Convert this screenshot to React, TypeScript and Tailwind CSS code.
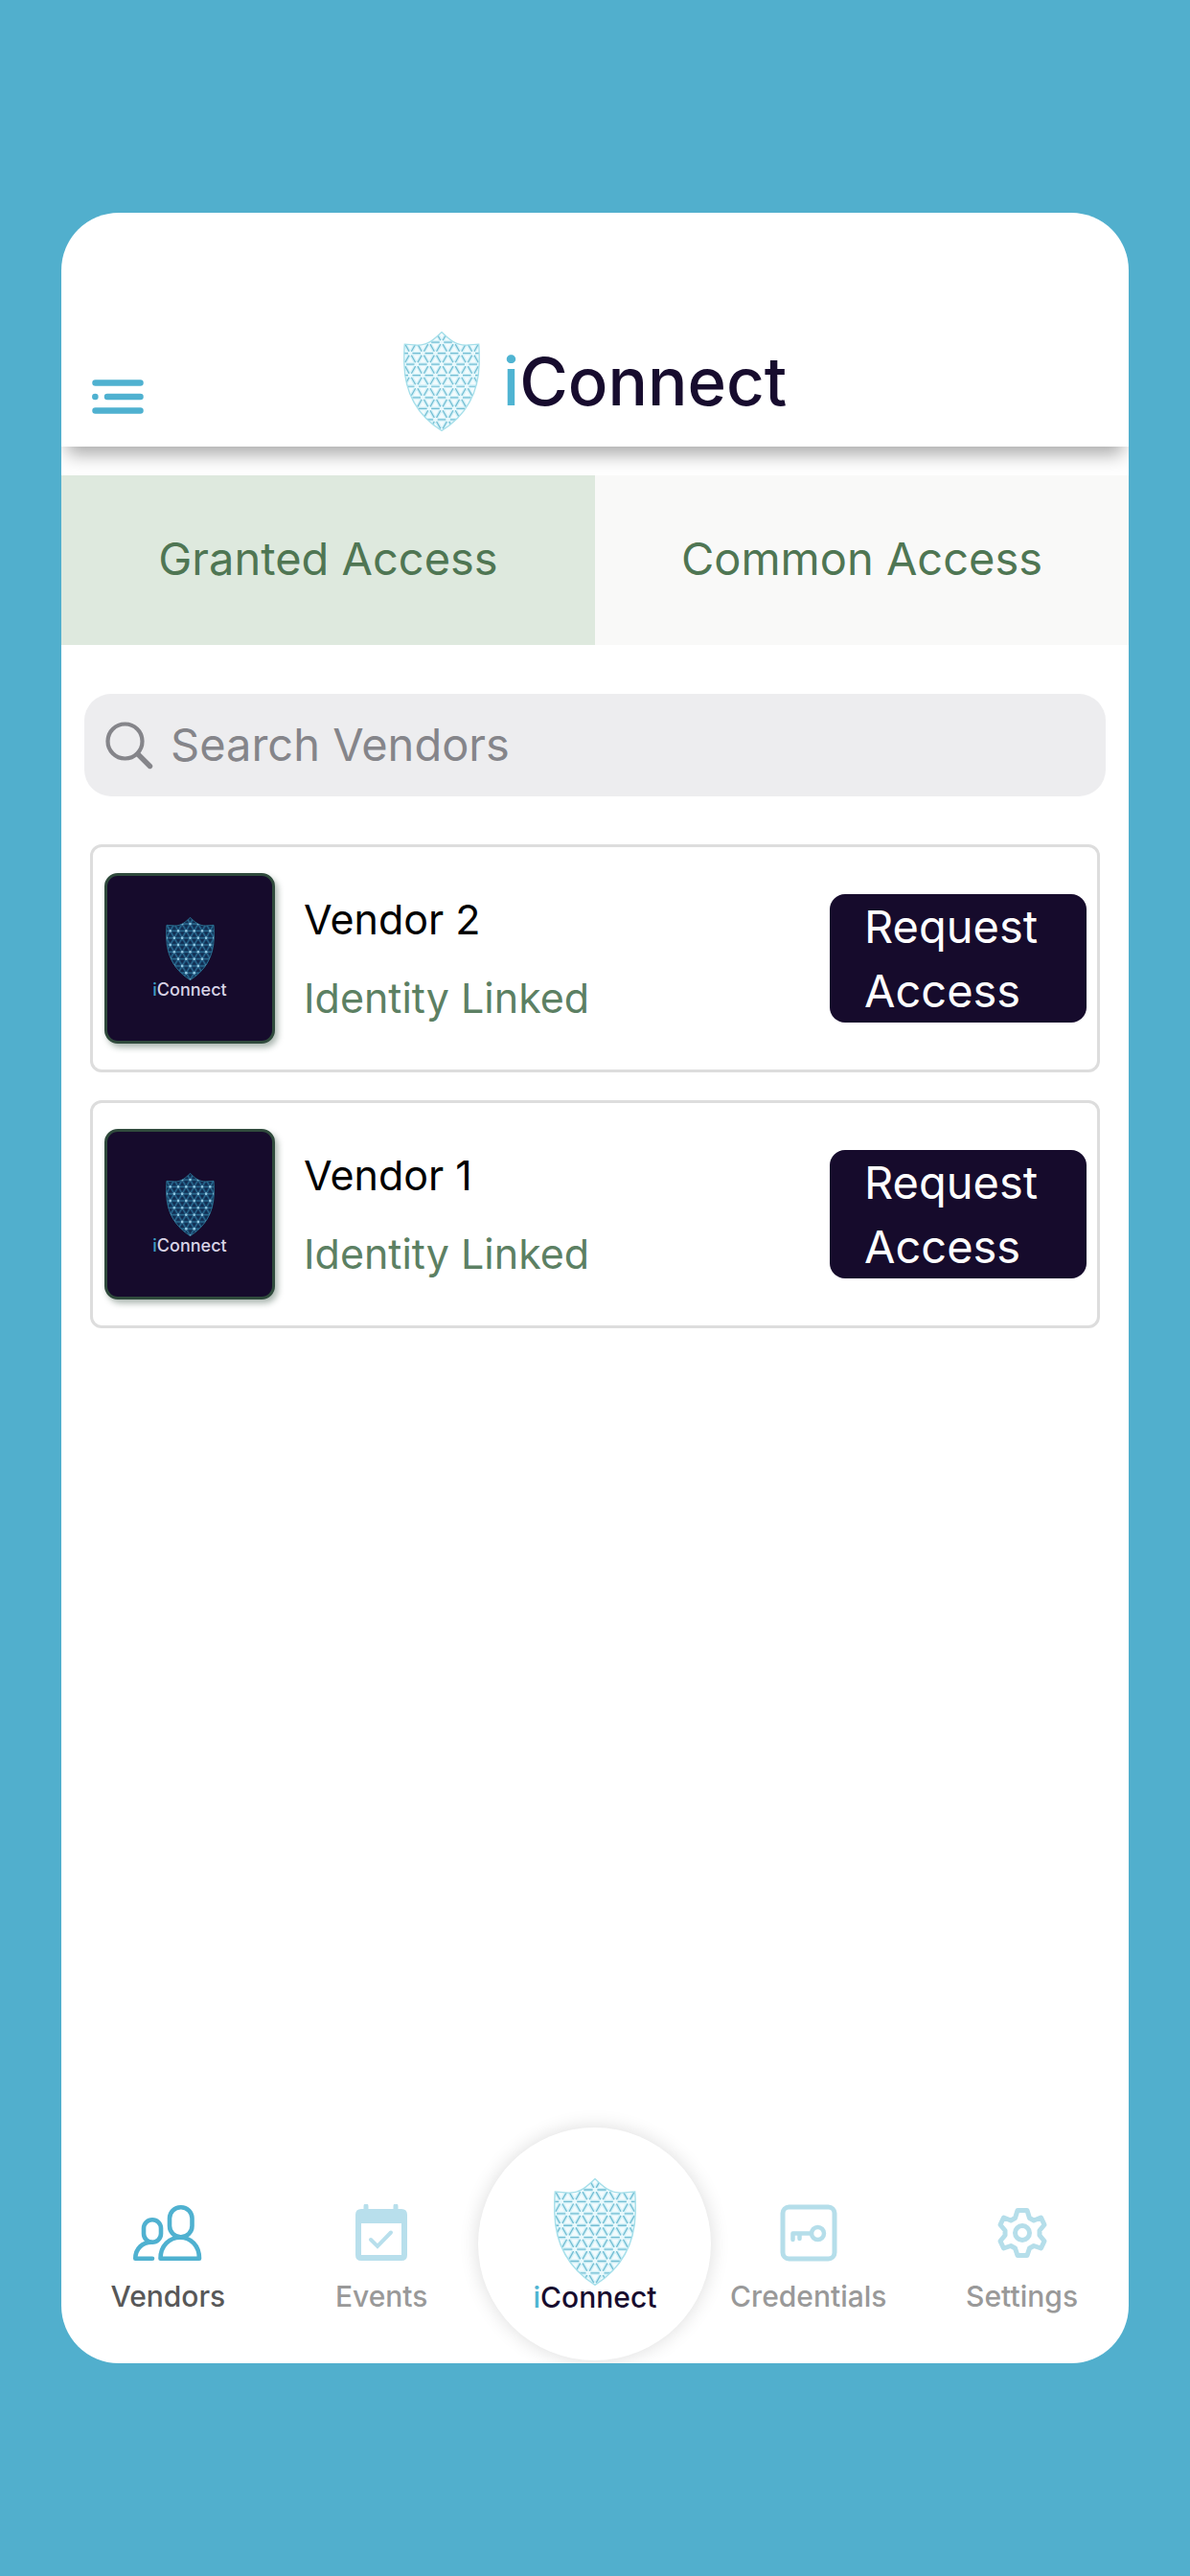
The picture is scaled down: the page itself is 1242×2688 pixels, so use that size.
import React, { useId, useState } from "react";

const SHIELD =
  "M42.5 .6C35 8 27 15.5 15 15L1.2 14C.6 20 .6 28 .7 36C1.5 72 18 95 42.5 110.4C67 95 83.5 72 84.3 36C84.4 28 84.4 20 83.8 14L70 15C58 15.5 50 8 42.5 .6Z";

const STEP_X = 14;
const STEP_Y = 12.3;

// triangular mesh: every edge is cut short so the joints stay open
const buildMesh = () => {
  const nodes: [number, number][] = [];
  let lines = "";

  const edge = (x1: number, y1: number, x2: number, y2: number) => {
    const t = 0.17;
    const dx = (x2 - x1) * t;
    const dy = (y2 - y1) * t;
    lines += `M${(x1 + dx).toFixed(1)} ${(y1 + dy).toFixed(1)}L${(x2 - dx).toFixed(1)} ${(y2 - dy).toFixed(1)}`;
  };

  for (let row = 0; row < 10; row++) {
    const y = row * STEP_Y - 0.4;
    const shift = row % 2 === 1 ? 0 : STEP_X / 2;
    for (let col = -4; col <= 4; col++) {
      const x = 42.5 + col * STEP_X + shift;
      nodes.push([x, y]);
      edge(x, y, x + STEP_X, y);
      edge(x, y, x - STEP_X / 2, y + STEP_Y);
      edge(x, y, x + STEP_X / 2, y + STEP_Y);
    }
  }
  return { nodes, lines };
};

const mesh = buildMesh();

const Shield = ({ className, dark = false }: { className: string; dark?: boolean }) => {
  const id = useId();
  return (
    <svg viewBox="0 0 85 111" className={className} aria-hidden="true">
      <clipPath id={id}>
        <path d={SHIELD} />
      </clipPath>
      <g clipPath={`url(#${id})`}>
        <path d={SHIELD} fill={dark ? "#122c50" : "#f3fbfd"} />
        <path d={mesh.lines} stroke={dark ? "#1d4c74" : "#d3f1f8"} strokeWidth="4" />
        <path d={mesh.lines} stroke={dark ? "#2f7699" : "#74bed3"} strokeWidth="1.3" />
        {mesh.nodes.map(([x, y], i) => (
          <circle key={i} cx={x} cy={y} r={dark ? 2.4 : 1.8} fill={dark ? "#8fc9e4" : "#e6f8fc"} />
        ))}
      </g>
      <path d={SHIELD} fill="none" stroke={dark ? "#2b7696" : "#a5dfea"} strokeWidth="1.4" />
    </svg>
  );
};

const MenuIcon = () => (
  <svg viewBox="0 0 54 36" className="w-[54px] h-9" fill="none" stroke="#4fb1d0" strokeWidth="6.5" strokeLinecap="round">
    <path d="M3.5 3.5H50.5M3.3 18H3.4M16 18H50.5M3.5 32.5H50.5" />
  </svg>
);

const SearchIcon = () => (
  <svg viewBox="0 0 50 50" className="size-[50px] shrink-0" fill="none" stroke="#85858a" strokeLinecap="round">
    <circle cx="20.5" cy="20.5" r="18" strokeWidth="4.2" />
    <path d="M34 34L46.5 46.5" strokeWidth="5.4" />
  </svg>
);

const VendorsIcon = () => (
  <svg viewBox="0 0 72 60" className="w-[72px] h-[60px]" fill="none" stroke="#4fb1d0" strokeWidth="4.6" strokeLinecap="round" strokeLinejoin="round">
    <rect x="38" y="3.2" width="23.5" height="31" rx="11.5" />
    <path d="M28.5 56.8C28.5 43 38 34.8 49 34.8S69 43 69 56.8Z" />
    <rect x="11" y="16.2" width="18" height="23.5" rx="9" />
    <path d="M20 56.8H2.3C2.3 46 10 39.8 19 39.8" />
  </svg>
);

const EventsIcon = () => (
  <svg viewBox="0 0 54 60" className="w-[54px] h-[60px]" fill="none" stroke="#b8dfec" strokeLinecap="round">
    <path d="M11 2V8M42 2V8" strokeWidth="5" />
    <path
      stroke="none"
      fillRule="evenodd"
      fill="#b8dfec"
      d="M6 5H48Q54 5 54 11V53Q54 59 48 59H6Q0 59 0 53V11Q0 5 6 5ZM6 20V53H48V20Z"
    />
    <path d="M16 37L23 44L37 29.5" strokeWidth="4" />
  </svg>
);

const CredentialsIcon = () => (
  <svg viewBox="0 0 60 60" className="size-[60px]" fill="none" stroke="#b5deea" strokeWidth="5">
    <rect x="3" y="3" width="54" height="54" rx="6.5" />
    <circle cx="39.5" cy="30.5" r="6.5" strokeWidth="4.5" />
    <path d="M33 30.5H13.5V37M20.5 31V36" strokeWidth="4.5" strokeLinejoin="round" strokeLinecap="round" />
  </svg>
);

const SettingsIcon = () => (
  <svg viewBox="0 0 60 60" className="size-[60px]" fill="none" stroke="#b5deea" strokeWidth="5" strokeLinejoin="round">
    <path d="M25 6.5H35L37.5 14.5L42 17L49.5 14L53 21.5L48 27.5V32.5L53 38.5L49.5 46L42 43.5L37.5 46L35 53.5H25L22.5 46L18 43.5L10.5 46L7 38.5L12 32.5V27.5L7 21.5L10.5 14L18 17L22.5 14.5Z" />
    <circle cx="30" cy="30" r="7.5" />
  </svg>
);

const vendors = [
  { name: "Vendor 2", status: "Identity Linked" },
  { name: "Vendor 1", status: "Identity Linked" },
];

const tabs = ["Granted Access", "Common Access"];

const NavItem = ({ label, active, children }: { label: string; active?: boolean; children: React.ReactNode }) => (
  <a href="#" className="flex flex-col items-center pb-[52px]">
    {children}
    <span className={`mt-[18px] text-[30px] leading-9 font-medium ${active ? "text-[#585858]" : "text-[#999999]"}`}>
      {label}
    </span>
  </a>
);

const App = () => {
  const [tab, setTab] = useState(tabs[0]);

  return (
    <div className="min-h-screen flex flex-col bg-[#51afcd] px-16 py-[222px] font-['Inter',sans-serif]">
      <div className="flex-1 flex flex-col bg-white rounded-[60px] overflow-hidden">
        <header className="grid grid-cols-[1fr_auto_1fr] items-end px-8 pt-[124px] pb-4 shadow-[0_14px_18px_-6px_rgba(0,0,0,0.34)]">
          <button type="button" aria-label="Menu" className="justify-self-start mb-[18px]">
            <MenuIcon />
          </button>
          <div className="flex items-center gap-6">
            <Shield className="w-20 h-[104px]" />
            <h1 className="text-[69px] leading-[72px] font-medium text-[#170c2e]">
              <span className="text-[#4fb4d2]">i</span>Connect
            </h1>
          </div>
        </header>

        <div role="tablist" className="relative mt-[30px] grid grid-cols-2">
          {tabs.map((name) => (
            <button
              key={name}
              type="button"
              role="tab"
              aria-selected={tab === name}
              onClick={() => setTab(name)}
              className={`h-[177px] pb-0.5 text-[47px] text-[#4f7653] ${tab === name ? "bg-[#dee9de]" : "bg-[#f9f9f8]"}`}
            >
              {name}
            </button>
          ))}
        </div>

        <label className="mx-6 mt-[51px] h-[107px] flex items-center gap-[18px] px-[22px] rounded-[28px] bg-[#ededef]">
          <SearchIcon />
          <input
            type="text"
            aria-label="Search Vendors"
            placeholder="Search Vendors"
            className="flex-1 min-w-0 bg-transparent text-[47px] text-[#333333] placeholder:text-[#85858a] outline-none"
          />
        </label>

        <ul className="mx-[30px] mt-[50px] flex flex-col gap-[29px]">
          {vendors.map((vendor) => (
            <li
              key={vendor.name}
              className="h-[238px] flex items-center pl-3 pr-[11px] rounded-xl border-3 border-[#dddddd]"
            >
              <div className="size-[178px] shrink-0 flex flex-col items-center justify-center rounded-[14px] border-3 border-[#2f4a3c] bg-[#160b2c] shadow-[3px_4px_6px_rgba(47,74,60,0.4)]">
                <Shield dark className="w-[51px] h-[66px]" />
                <p className="text-[18px] leading-5 font-medium text-[#d9d3e6]">
                  <span className="text-[#3c9dc0]">i</span>Connect
                </p>
              </div>
              <div className="flex-1 pl-[30px] text-[43px] leading-[82px]">
                <h2 className="text-black">{vendor.name}</h2>
                <p className="text-[#5c8063]">{vendor.status}</p>
              </div>
              <button
                type="button"
                className="w-[268px] h-[134px] shrink-0 rounded-2xl bg-[#160b2c] px-9 text-left text-[47px] leading-[67px] text-white"
              >
                Request Access
              </button>
            </li>
          ))}
        </ul>

        <nav className="mt-auto grid grid-cols-5 items-end">
          <NavItem label="Vendors" active>
            <VendorsIcon />
          </NavItem>
          <NavItem label="Events">
            <EventsIcon />
          </NavItem>
          <a
            href="#"
            className="justify-self-center -mx-3 mb-[3px] size-[243px] flex flex-col items-center pt-[53px] rounded-full bg-white shadow-[0_0_20px_rgba(0,0,0,0.14)]"
          >
            <Shield className="w-[86px] h-[112px]" />
            <span className="text-[30px] leading-6 font-medium text-[#170c2e]">
              <span className="text-[#4fb4d2]">i</span>Connect
            </span>
          </a>
          <NavItem label="Credentials">
            <CredentialsIcon />
          </NavItem>
          <NavItem label="Settings">
            <SettingsIcon />
          </NavItem>
        </nav>
      </div>
    </div>
  );
};

export default App;
